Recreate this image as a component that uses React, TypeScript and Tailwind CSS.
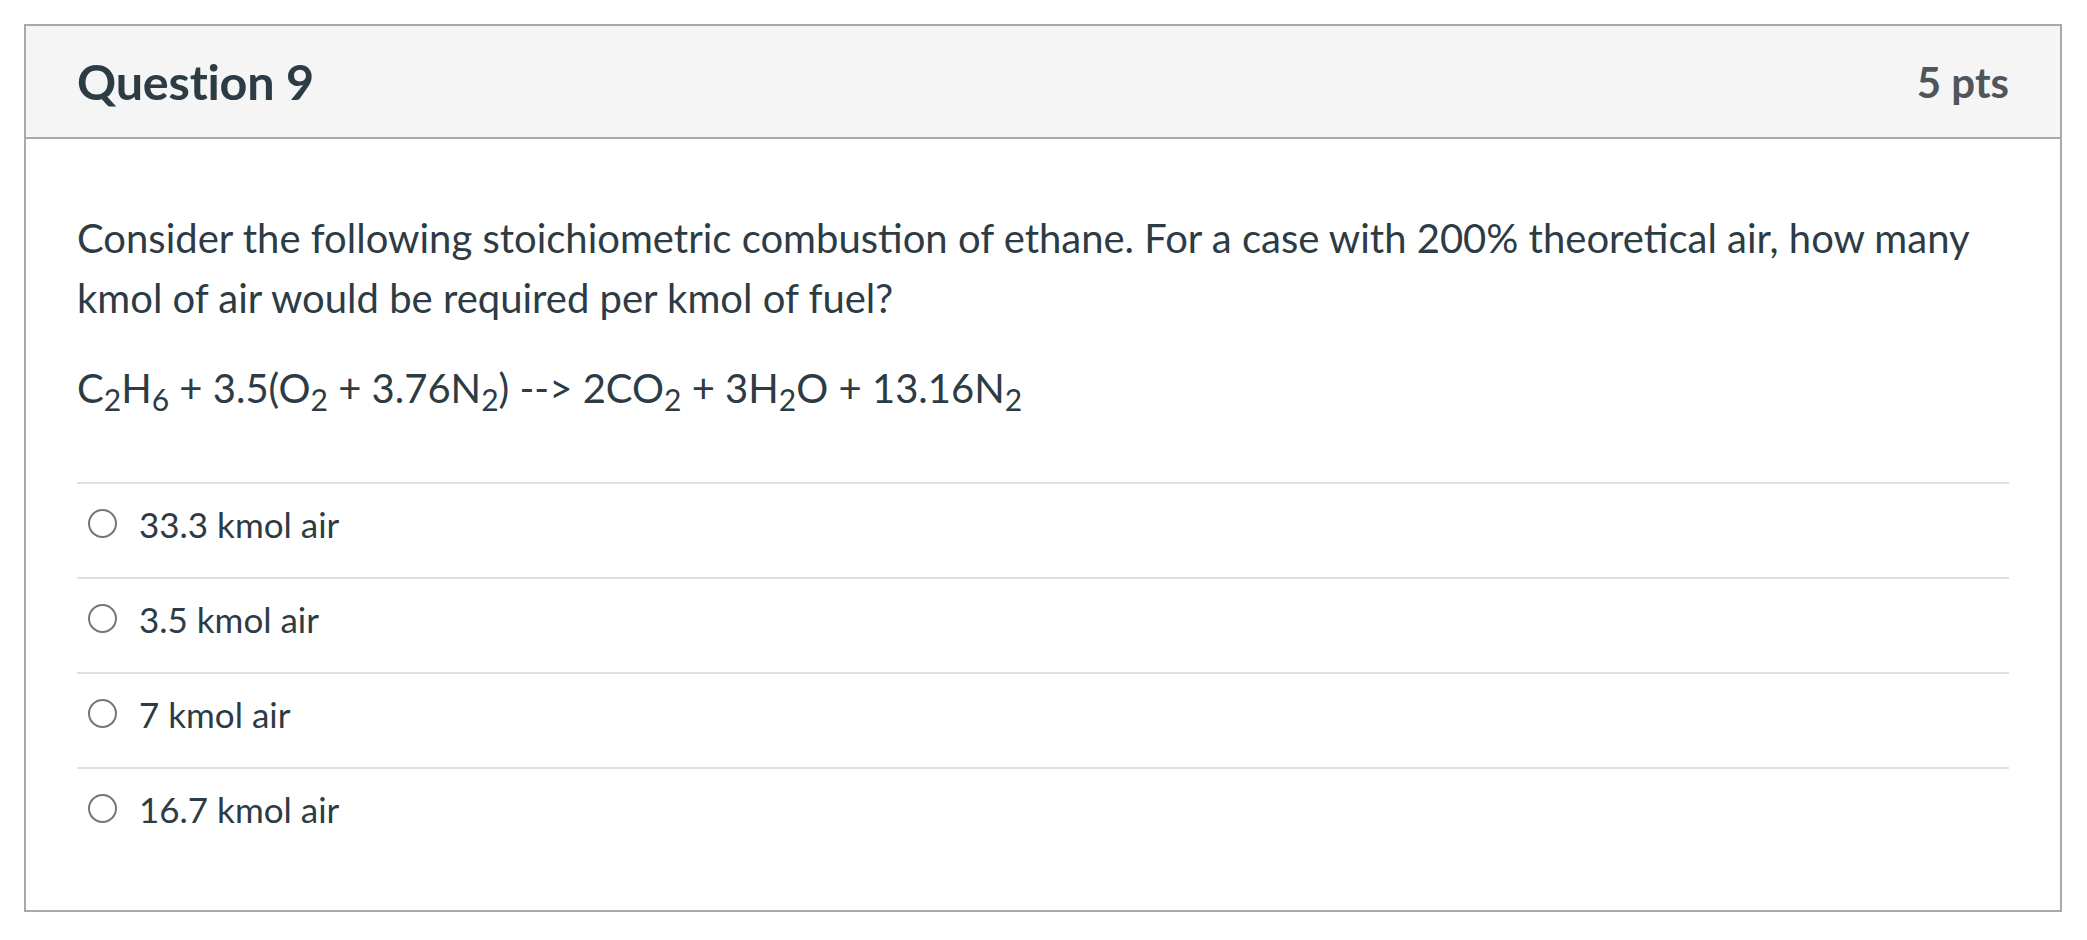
const answers = ['33.3 kmol air', '3.5 kmol air', '7 kmol air', '16.7 kmol air'];

export default function App() {
  return (
    <div className="min-h-screen bg-white pl-[24px] pt-[24px] font-['Lato','Liberation_Sans',sans-serif] text-[#2d3b45]">
      <div className="w-[2038px] border-2 border-[#a9a9a9] bg-white">
        {/* Header */}
        <div className="flex h-[113px] items-center justify-between border-b-2 border-[#a9a9a9] bg-[#f5f5f5] px-[51px]">
          <h2 className="text-[48.5px] font-bold leading-none tracking-[-0.2px] text-[#2d3b45]">Question 9</h2>
          <div className="text-[42px] font-bold leading-none text-[#4f565b]">5 pts</div>
        </div>

        {/* Body */}
        <div className="px-[51px] pt-[69px] pb-[48px]">
          <p className="text-[40px] leading-[60px]">
            Consider the following stoichiometric combustion of ethane. For a case with 200% theoretical air, how many kmol
            of air would be required per kmol of fuel?
          </p>
          <p className="mt-[30px] text-[40px] leading-[60px]">
            C<sub>2</sub>H<sub>6</sub> + 3.5(O<sub>2</sub> + 3.76N<sub>2</sub>) --&gt; 2CO<sub>2</sub> + 3H<sub>2</sub>O +
            13.16N<sub>2</sub>
          </p>

          <div className="mt-[64px]">
            {answers.map((a) => (
              <label
                key={a}
                className="flex h-[95px] items-start gap-[22px] border-t-2 border-[#e0e0e0] pt-[19px] pl-[11px]"
              >
                <span className="mt-[6px] h-[29px] w-[29px] shrink-0 rounded-full border-2 border-[#767676] bg-white" />
                <span className="text-[35px] leading-[42px] text-[#2d3b45]">{a}</span>
              </label>
            ))}
          </div>
        </div>
      </div>
    </div>
  );
}
